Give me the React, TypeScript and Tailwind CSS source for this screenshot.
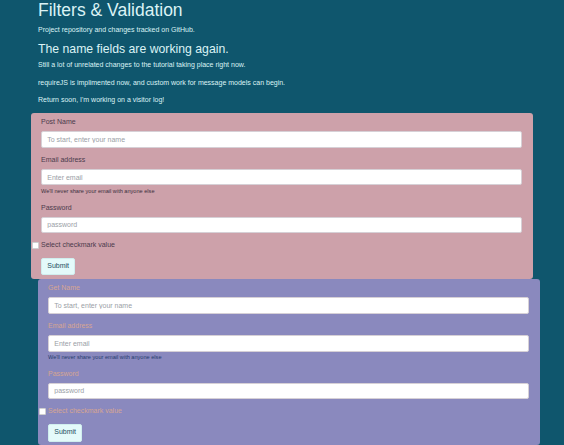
import React from 'react';

interface PanelProps {
  title: string;
  panelClass: string;
  labelClass: string;
  helpClass: string;
}

const Field: React.FC<{ label: string; placeholder: string; type?: string; labelClass: string; help?: string; helpClass: string }> = ({
  label,
  placeholder,
  type = 'text',
  labelClass,
  help,
  helpClass,
}) => (
  <div className="mb-[7px]">
    <label className={`block mb-[3.5px] ${labelClass}`}>{label}</label>
    <input
      type={type}
      placeholder={placeholder}
      className="block w-full h-[16.6px] px-[5.25px] bg-white border border-[#d6d0d6] rounded-[2px] text-[7px] text-[#495057] placeholder:text-[#9aa0a6] outline-none"
    />
    {help && <small className={`block mt-[1.75px] text-[5.6px] leading-[1.5] ${helpClass}`}>{help}</small>}
  </div>
);

const FormPanel: React.FC<PanelProps> = ({ title, panelClass, labelClass, helpClass }) => (
  <form className={`rounded-[3px] pt-[4.5px] pb-[3.5px] pl-[10px] pr-[11px] ${panelClass}`} onSubmit={e => e.preventDefault()}>
    <Field label={title} placeholder="To start, enter your name" labelClass={labelClass} helpClass={helpClass} />
    <Field
      label="Email address"
      placeholder="Enter email"
      type="email"
      labelClass={labelClass}
      help="We'll never share your email with anyone else"
      helpClass={helpClass}
    />
    <Field label="Password" placeholder="password" type="password" labelClass={labelClass} helpClass={helpClass} />
    <div className="relative mt-[2px] mb-[7px] h-[10.5px] flex items-center">
      <input type="checkbox" className="absolute left-[-9px] w-[6.5px] h-[6.5px] m-0 appearance-none bg-white border border-[#cfcfcf] rounded-[1px]" />
      <label className={labelClass}>Select checkmark value</label>
    </div>
    <button
      type="submit"
      className="h-[17.75px] px-[5.25px] bg-[#e4fafa] border border-[#d0eeee] rounded-[2px] text-[7px] leading-[1.5] text-[#1d4f5f]"
    >
      Submit
    </button>
  </form>
);

export default function App() {
  return (
    <div className="min-h-screen bg-[#0f566d] font-['Liberation_Sans',Arial,sans-serif] text-[7px] leading-[1.5] overflow-hidden">
      <div className="w-[488px] mx-auto text-[#dbf3f5]">
        <h1 className="text-[17.5px] leading-[1.2] mb-[3.5px]">Filters &amp; Validation</h1>
        <p className="mb-[7px]">Project repository and changes tracked on GitHub.</p>
        <h3 className="text-[12.25px] leading-[1.2] mb-[3.5px]">The name fields are working again.</h3>
        <p className="mb-[7px]">Still a lot of unrelated changes to the tutorial taking place right now.</p>
        <p className="mb-[7px]">requireJS is implimented now, and custom work for message models can begin.</p>
        <p className="mb-[7px]">Return soon, I'm working on a visitor log!</p>

        <div className="-mx-[7px]">
          <FormPanel title="Post Name" panelClass="bg-[#cda1aa]" labelClass="text-[#4b3b4c]" helpClass="text-[#3b2f3d]" />
        </div>
        <div className="mr-[-14px]">
          <FormPanel title="Get Name" panelClass="bg-[#8a89be]" labelClass="text-[#d6a592]" helpClass="text-[#263c6e]" />
        </div>
      </div>
    </div>
  );
}
